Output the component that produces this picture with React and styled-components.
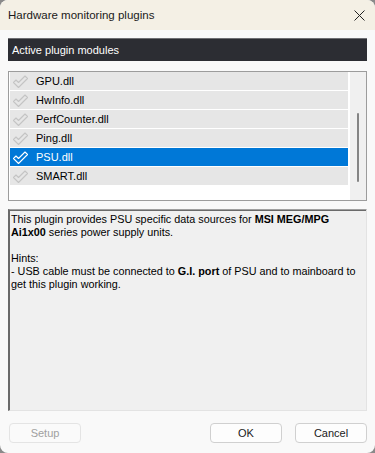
import React from "react";
import styled, { createGlobalStyle } from "styled-components";

const Global = createGlobalStyle`
  html, body { margin: 0; padding: 0; background: #8a8a8a; }
  body { width: 375px; height: 453px; overflow: hidden; }
`;

const Window = styled.div`
  width: 375px;
  height: 453px;
  box-sizing: border-box;
  background: #f9f9f9;
  border-radius: 8px;
  overflow: hidden;
  display: flex;
  flex-direction: column;
  font-family: "Liberation Sans", Arial, sans-serif;
`;

const TitleBar = styled.div`
  height: 30px;
  flex: none;
  background: #f4f0e5;
  display: flex;
  align-items: center;
  justify-content: space-between;
  padding: 0 10px 0 8px;
  font-family: "Liberation Sans", Arial, sans-serif;
  font-size: 11.5px;
  color: #1a1a1a;
`;

const CloseIcon = styled.svg`
  width: 11px;
  height: 11px;
`;

const Body = styled.div`
  flex: 1;
  display: flex;
  flex-direction: column;
  padding: 8px 8px 10px 8px;
`;

const SectionHeader = styled.div`
  height: 23px;
  flex: none;
  background: #2c2d33;
  border-top: 1px solid #6e6e72;
  box-sizing: border-box;
  display: flex;
  align-items: center;
  padding-left: 4px;
  color: #ffffff;
  font-family: "Liberation Sans", Arial, sans-serif;
  font-size: 11px;
`;

const ListBox = styled.div`
  margin-top: 10px;
  height: 130px;
  flex: none;
  box-sizing: border-box;
  border: 1px solid #9c9c9c;
  background: #ffffff;
  display: grid;
  grid-template-columns: 1fr 16px;
  column-gap: 2px;
  padding-left: 1px;
`;

const Rows = styled.div`
  display: flex;
  flex-direction: column;
  gap: 1px;
`;

const Row = styled.div`
  height: 18px;
  display: flex;
  align-items: center;
  background: ${(p) => (p.$selected ? "#0078d7" : "#e6e6e6")};
  color: ${(p) => (p.$selected ? "#ffffff" : "#000000")};
  font-size: 11px;
  padding-left: 2px;
  gap: 7px;
`;

const Scrollbar = styled.div`
  background: #f0f0f0;
  display: flex;
  justify-content: center;
  padding-top: 41px;
`;

const Thumb = styled.div`
  width: 2px;
  height: 69px;
  background: #858585;
  border-radius: 1px;
`;

const Description = styled.div`
  margin-top: 8px;
  height: 202px;
  flex: none;
  box-sizing: border-box;
  background: #f0f0f0;
  border-top: 1px solid #a0a0a0;
  border-left: 2px solid #6a6a6a;
  border-right: 1px solid #e3e3e3;
  border-bottom: 1px solid #e3e3e3;
  box-shadow: inset 0 1px 0 #6a6a6a;
  padding: 3px 4px 0 1px;
  font-size: 10.8px;
  line-height: 13px;
  color: #000;
`;

const Para = styled.p`
  margin: 0 0 ${(p) => (p.$last ? "0" : "13px")} 0;
`;

const Footer = styled.div`
  margin-top: 12px;
  display: flex;
  align-items: center;
  gap: 13px;
  padding-left: 1px;
`;

const Button = styled.button`
  width: 72px;
  height: 20px;
  box-sizing: border-box;
  border: 1px solid ${(p) => (p.disabled ? "#e4e4e4" : "#d0d0d0")};
  border-radius: 4px;
  background: ${(p) => (p.disabled ? "#fafafa" : "#fdfdfd")};
  color: ${(p) => (p.disabled ? "#a0a0a0" : "#1a1a1a")};
  font-family: "Liberation Sans", Arial, sans-serif;
  font-size: 11px;
  padding: 0;
  display: flex;
  align-items: center;
  justify-content: center;
  ${(p) => (p.$pushRight ? "margin-left: auto;" : "")}
`;

const Check = ({ selected }) => (
  <svg width="17" height="15" viewBox="0 0 17 15">
    <path
      d="M1.5 8.5 L4 6 L6.5 8.5 L13 2 L15.5 4.5 L6.5 13.5 Z"
      fill="none"
      stroke={selected ? "#ffffff" : "#c4c4c4"}
      strokeWidth="1.1"
      strokeLinejoin="round"
    />
  </svg>
);

const plugins = ["GPU.dll", "HwInfo.dll", "PerfCounter.dll", "Ping.dll", "PSU.dll", "SMART.dll"];

export default function App() {
  return (
    <>
      <Global />
      <Window>
        <TitleBar>
          <span>Hardware monitoring plugins</span>
          <CloseIcon viewBox="0 0 11 11">
            <path d="M0.5 0.5 L10.5 10.5 M10.5 0.5 L0.5 10.5" stroke="#222" strokeWidth="1" />
          </CloseIcon>
        </TitleBar>
        <Body>
          <SectionHeader>Active plugin modules</SectionHeader>
          <ListBox>
            <Rows>
              {plugins.map((p) => (
                <Row key={p} $selected={p === "PSU.dll"}>
                  <Check selected={p === "PSU.dll"} />
                  {p}
                </Row>
              ))}
            </Rows>
            <Scrollbar>
              <Thumb />
            </Scrollbar>
          </ListBox>
          <Description>
            <Para>
              This plugin provides PSU specific data sources for <b>MSI MEG/MPG Ai1x00</b> series power
              supply units.
            </Para>
            <Para $last>
              Hints:
              <br />- USB cable must be connected to <b>G.I. port</b> of PSU and to mainboard to get this
              plugin working.
            </Para>
          </Description>
          <Footer>
            <Button disabled>Setup</Button>
            <Button $pushRight>OK</Button>
            <Button>Cancel</Button>
          </Footer>
        </Body>
      </Window>
    </>
  );
}
